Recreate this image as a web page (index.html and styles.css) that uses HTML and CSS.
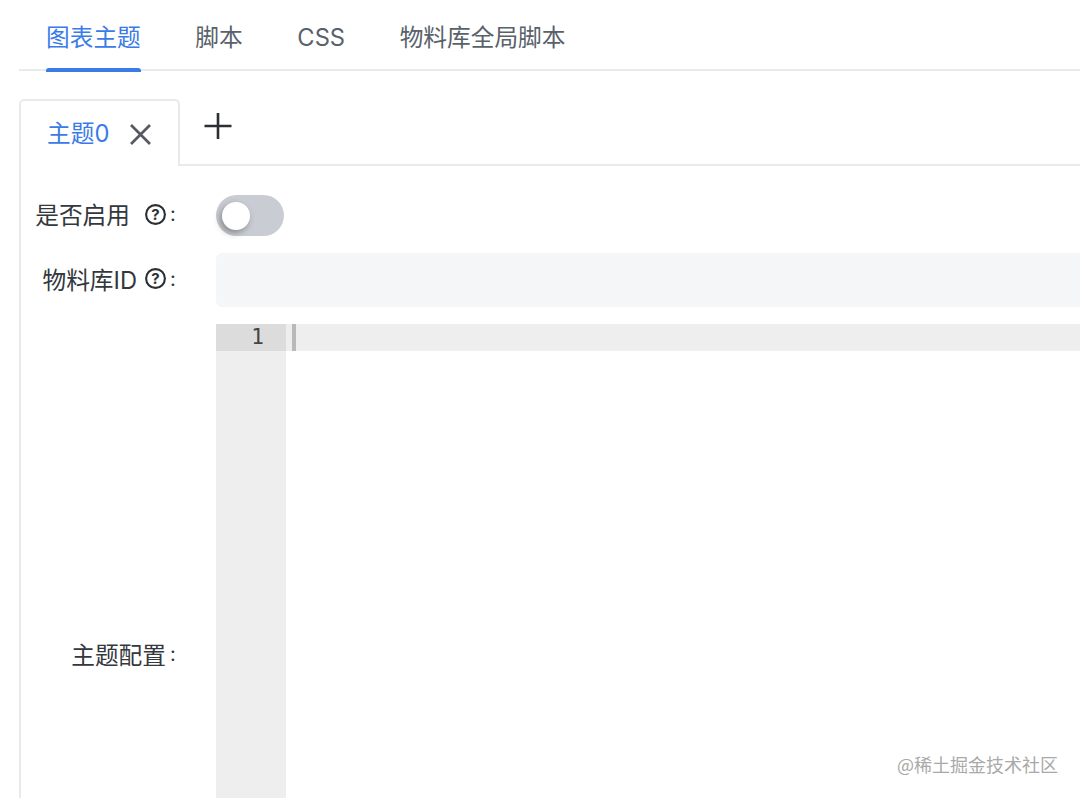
FILE: index.html
```html
<!DOCTYPE html>
<html lang="zh-CN">
<head>
<meta charset="utf-8">
<title>图表主题</title>
<link rel="stylesheet" href="styles.css">
</head>
<body>
<main class="page">
  <nav class="tabs">
    <a class="tab tab-active">图表主题</a>
    <a class="tab">脚本</a>
    <a class="tab">CSS</a>
    <a class="tab">物料库全局脚本</a>
  </nav>
  <div class="card-bar">
    <div class="card-tab">
      <span class="card-title">主题0</span>
      <svg class="close-icon" viewBox="0 0 24 24" width="24" height="24" fill="none" stroke="#555a60" stroke-width="2.7"><path d="M3 3 22 22M22 3 3 22"/></svg>
    </div>
    <svg class="plus-icon" viewBox="0 0 28 28" width="28" height="28" fill="none" stroke="#2b2f33" stroke-width="2.6"><path d="M14 1V27M0.5 14H27.5"/></svg>
  </div>
  <form class="form">
    <div class="row row-switch">
      <div class="label"><span>是否启用</span><svg class="help wide" viewBox="0 0 21 21" width="21" height="21"><circle cx="10.5" cy="10.5" r="9.4" fill="none" stroke="#2b2f33" stroke-width="2.1"/><text x="10.5" y="15.8" text-anchor="middle" class="help-mark">?</text></svg><span class="colon">:</span></div>
      <div class="switch"><span class="knob"></span></div>
    </div>
    <div class="row row-input">
      <div class="label"><span>物料库ID</span><svg class="help" viewBox="0 0 21 21" width="21" height="21"><circle cx="10.5" cy="10.5" r="9.4" fill="none" stroke="#2b2f33" stroke-width="2.1"/><text x="10.5" y="15.8" text-anchor="middle" class="help-mark">?</text></svg><span class="colon">:</span></div>
      <div class="input"></div>
    </div>
    <div class="row row-editor">
      <div class="label"><span>主题配置</span><span class="colon">:</span></div>
      <div class="editor">
        <div class="gutter"><div class="line-no">1</div></div>
        <div class="code"><div class="active-line"><span class="cursor"></span></div></div>
      </div>
    </div>
  </form>
  <div class="watermark">@稀土掘金技术社区</div>
</main>
</body>
</html>
```
FILE: styles.css
```css
* { box-sizing: border-box; }
html, body { margin: 0; height: 798px; overflow: hidden; background: #fff; }
body { font-family: Inter, "Noto Sans CJK SC", sans-serif; font-size: 23.7px; color: #33383d; }
.page { position: relative; width: 1080px; height: 798px; overflow: hidden; padding: 0 0 0 19px; }
.tabs { display: flex; gap: 54.6px; height: 71px; padding-left: 27px; border-bottom: 2px solid #e9eaec; }
.tab { position: relative; display: block; height: 71px; line-height: 75px; color: #59616b; white-space: nowrap; }
.tab-active { color: #3a7be8; }
.tab-active::after { content: ""; position: absolute; left: 0; right: 0; top: 68px; height: 4px; background: #3a7be8; border-radius: 3px 3px 0 0; }
.card-bar { display: flex; align-items: flex-start; height: 67px; margin-top: 28px; border-bottom: 2px solid #e9eaec; }
.card-tab { display: flex; align-items: center; width: 161px; height: 67px; padding: 0 0 0 26px; background: #fff; border: 2px solid #e9eaec; border-bottom: 0; border-radius: 5px 5px 0 0; }
.card-title { color: #3a7be8; line-height: 65px; }
.close-icon { margin-left: 19px; margin-top: 0; }
.plus-icon { margin: 13px 0 0 24px; }
.form { border-left: 2px solid #e9eaec; height: 640px; padding-top: 29px; }
.row { display: grid; grid-template-columns: 154px 1fr; column-gap: 41px; }
.row-switch { height: 41px; align-items: center; }
.row-input { height: 54px; margin-top: 17px; }
.row-editor { height: 662px; margin-top: 17px; }
.label { display: flex; align-items: center; justify-content: flex-end; color: #33383d; white-space: nowrap; height: 100%; padding-bottom: 3px; }
.help { margin-left: 8px; flex: none; }
.help.wide { margin-left: 15px; }
.help-mark { font: 700 15px Inter, sans-serif; fill: #2b2f33; }
.colon { width: 9px; text-align: left; padding-left: 4px; font-size: 20px; }
.switch { position: relative; width: 68px; height: 41px; border-radius: 21px; background: #c9ccd3; }
.knob { position: absolute; left: 6px; top: 7px; width: 28px; height: 28px; border-radius: 50%; background: #fff; box-shadow: -2px 3px 6px rgba(60, 60, 60, .45); }
.input { height: 54px; background: #f5f6f7; border-radius: 6px 0 0 6px; }
.editor { display: grid; grid-template-columns: 70px 1fr; height: 662px; background: #fff; }
.gutter { background: #eeeeee; }
.line-no { height: 27px; background: #dcdcdc; text-align: right; padding-right: 22px; font: 21px/27px "DejaVu Sans Mono", monospace; color: #444; }
.active-line { height: 27px; background: #eeeeee; padding-left: 6px; }
.cursor { display: block; width: 4px; height: 27px; background: #b9b9b9; }
.watermark { position: absolute; right: 22px; top: 751px; font-size: 18px; line-height: 26px; font-family: "Noto Sans CJK SC", sans-serif; color: #a9a9a9; text-shadow: 0 0 2px #fff; white-space: nowrap; }
```
